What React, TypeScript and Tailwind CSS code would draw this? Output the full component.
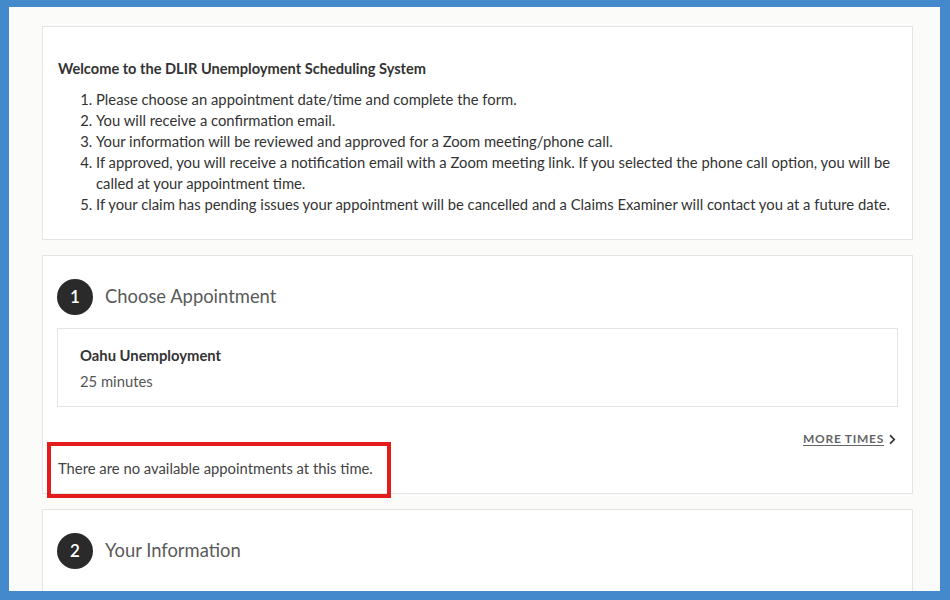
import { FaChevronRight } from 'react-icons/fa';

const steps = [
  'Please choose an appointment date/time and complete the form.',
  'You will receive a confirmation email.',
  'Your information will be reviewed and approved for a Zoom meeting/phone call.',
  'If approved, you will receive a notification email with a Zoom meeting link. If you selected the phone call option, you will be called at your appointment time.',
  'If your claim has pending issues your appointment will be cancelled and a Claims Examiner will contact you at a future date.',
];

function StepHeader({ num, title }: { num: number; title: string }) {
  return (
    <div className="flex items-center gap-3">
      <span className="flex h-9 w-9 items-center justify-center rounded-full bg-[#2a2a2a] text-[17px] font-semibold text-white">
        {num}
      </span>
      <h2 className="text-[18.4px] font-normal text-[#5a5a5a]">{title}</h2>
    </div>
  );
}

export default function App() {
  return (
    <div
      className="h-[600px] w-[950px] bg-[#4489cc] pb-[9px] pl-[9px] pr-[10px] pt-[7px]"
      style={{ fontFamily: '"Source Sans Pro", Lato, "Noto Sans", sans-serif' }}
    >
      <div className="flex h-full flex-col gap-[15px] overflow-hidden bg-[#fbfbfa] pl-[33px] pr-[27px] pt-[19px]">
        <section className="shrink-0 border border-[#e4e4e4] bg-white px-[15px] pb-[24px] pt-[31px] text-[14.8px] text-[#333]">
          <h1 className="text-[14.6px] font-bold leading-[21px]">Welcome to the DLIR Unemployment Scheduling System</h1>
          <ol className="mt-[10px] list-decimal pl-[38px] leading-[21px]">
            {steps.map((s) => (
              <li key={s}>{s}</li>
            ))}
          </ol>
        </section>

        <section className="relative shrink-0 border border-[#e4e4e4] bg-white px-[14px] pb-[14px] pt-[23px] text-[14.8px] text-[#333]">
          <StepHeader num={1} title="Choose Appointment" />
          <div className="mt-[13px] border border-[#e4e4e4] px-[22px] pb-[14px] pt-[15px]">
            <p className="font-bold leading-[22px]">Oahu Unemployment</p>
            <p className="mt-[4px] leading-[22px] text-[#555]">25 minutes</p>
          </div>
          <div className="mt-[23px] flex justify-end">
            <a className="flex items-center gap-[3px] text-[12px] font-bold tracking-[0.06em] text-[#666] underline underline-offset-2">
              MORE TIMES
              <FaChevronRight className="h-[11px] w-[11px] text-[#333]" />
            </a>
          </div>
          <p className="mt-[9px] pl-[1px] leading-[22px] text-[#444]">There are no available appointments at this time.</p>
          <div className="pointer-events-none absolute left-[4px] top-[186px] h-[56px] w-[344px] border-[4px] border-[#e51c1c]" />
        </section>

        <section className="shrink-0 border border-[#e4e4e4] bg-white px-[14px] pb-[24px] pt-[23px]">
          <StepHeader num={2} title="Your Information" />
        </section>
      </div>
    </div>
  );
}
